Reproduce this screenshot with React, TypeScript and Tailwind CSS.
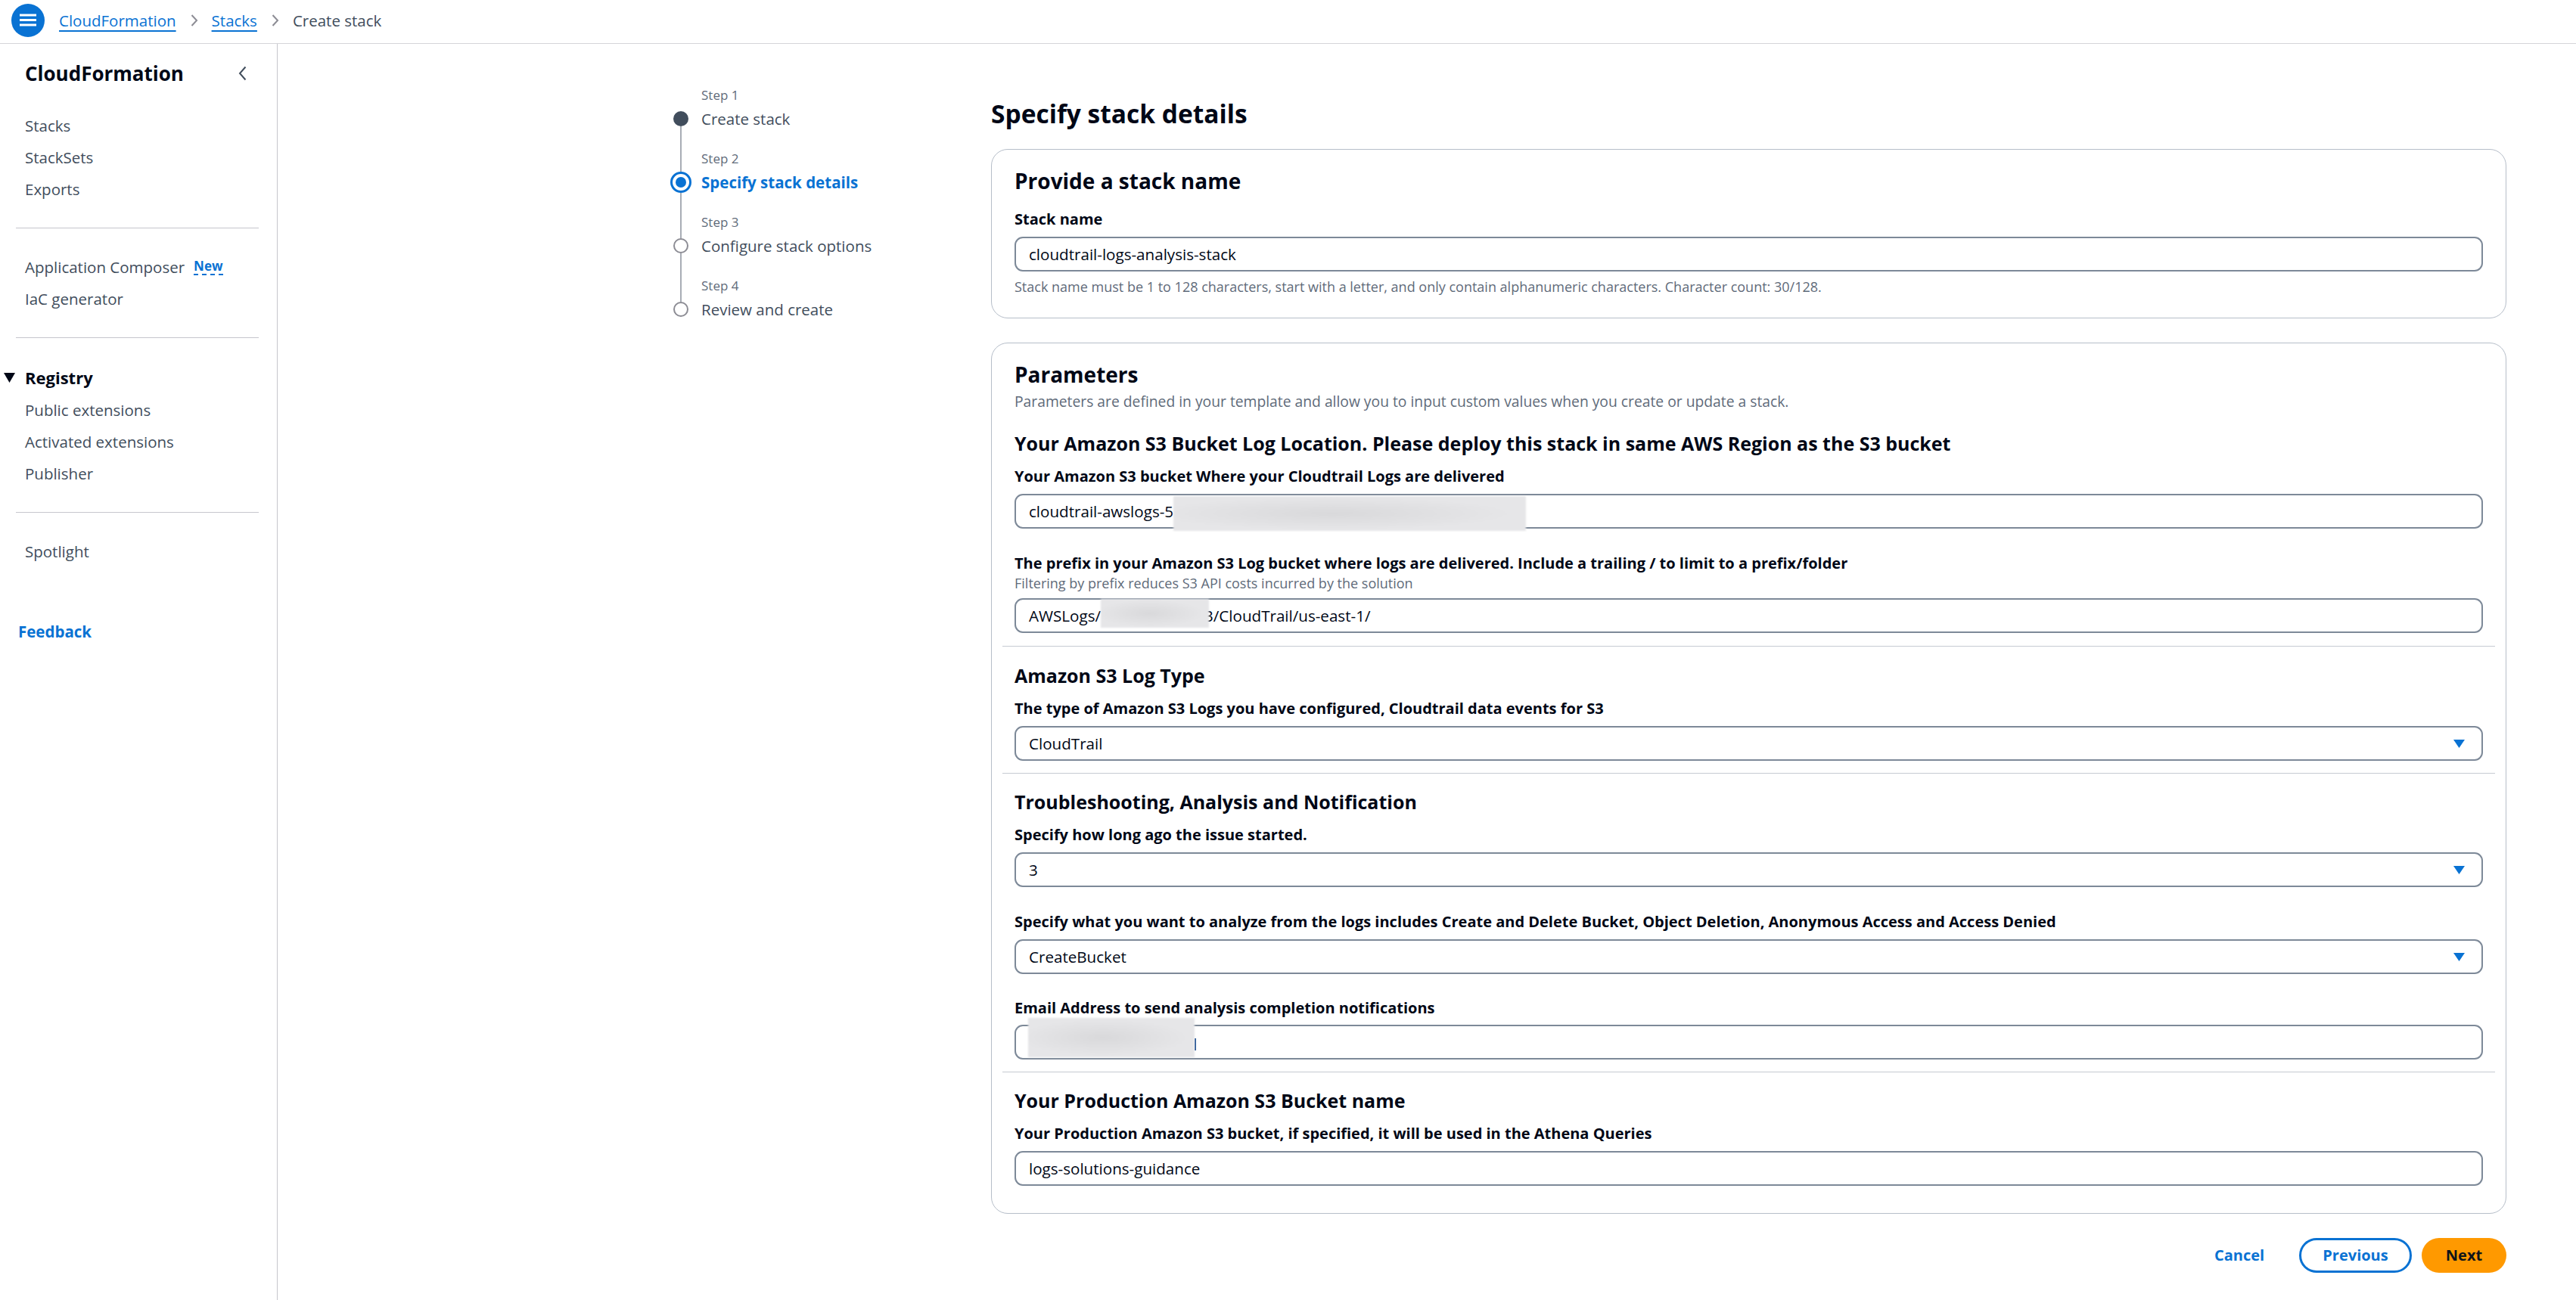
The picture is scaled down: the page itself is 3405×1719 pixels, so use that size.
import React from "react";

const blue = "#0972d3";

function Crumb() {
  return (
    <svg width="13" height="18" viewBox="0 0 13 18" className="mx-[17px] shrink-0">
      <path d="M3.5 2l6.5 7-6.5 7" fill="none" stroke="#8c8c94" strokeWidth="2" />
    </svg>
  );
}

function Redacted({ className }: { className: string }) {
  return (
    <span
      className={`relative z-10 inline-block shrink-0 bg-[radial-gradient(ellipse_at_45%_50%,#d9d9db,#e6e6e8_65%)] blur-[1px] ${className}`}
    />
  );
}

function Field({ children, select, className = "" }: { children: React.ReactNode; select?: boolean; className?: string }) {
  return (
    <div
      className={`flex h-[46px] items-center whitespace-nowrap rounded-[11px] border-2 border-[#7d8998] pl-[17px] pr-[22px] text-[20.6px] text-[#000716] ${className}`}
    >
      {children}
      {select && (
        <svg width="15" height="11" viewBox="0 0 15 11" className="ml-auto shrink-0">
          <path d="M0 0h15L7.5 11z" fill={blue} />
        </svg>
      )}
    </div>
  );
}

function Label({ children, className = "" }: { children: React.ReactNode; className?: string }) {
  return <div className={`text-[20px] font-bold leading-[28px] text-[#000716] ${className}`}>{children}</div>;
}

function SectionTitle({ children, className = "" }: { children: React.ReactNode; className?: string }) {
  return <h3 className={`text-[25px] font-bold leading-[29px] text-[#000716] ${className}`}>{children}</h3>;
}

function Hint({ children, className = "" }: { children: React.ReactNode; className?: string }) {
  return <p className={`text-[18px] leading-[22px] text-[#5f6b7a] ${className}`}>{children}</p>;
}

function Divider({ className = "" }: { className?: string }) {
  return <div className={`-mx-[16px] h-px bg-[#c6cbd2] ${className}`} />;
}

const steps = [
  { title: "Create stack", state: "done" },
  { title: "Specify stack details", state: "active" },
  { title: "Configure stack options", state: "todo" },
  { title: "Review and create", state: "todo" },
];

function Stepper() {
  return (
    <div className="flex w-[424px] shrink-0 flex-col">
      {steps.map((s, i) => {
        const last = i === steps.length - 1;
        return (
          <div key={s.title} className="flex gap-[13px]">
            <div className="flex w-[28px] shrink-0 flex-col items-center">
              <div
                className={`w-[2px] ${s.state === "active" ? "h-[28px]" : "h-[32px]"} ${i === 0 ? "" : "bg-[#a8adb5]"}`}
              />
              {s.state === "done" && <div className="h-[20px] w-[20px] rounded-full bg-[#414d5c]" />}
              {s.state === "active" && (
                <div className="flex h-[28px] w-[28px] items-center justify-center rounded-full border-[3px] border-[#0972d3]">
                  <div className="h-[14px] w-[14px] rounded-full bg-[#0972d3]" />
                </div>
              )}
              {s.state === "todo" && <div className="h-[20px] w-[20px] rounded-full border-2 border-[#8c8c94] bg-white" />}
              <div className={`w-[2px] flex-1 ${last ? "" : "bg-[#a8adb5]"}`} />
            </div>
            <div className={`flex flex-col ${last ? "" : "pb-[28px]"}`}>
              <span className="text-[17px] leading-[22px] text-[#5f6b7a]">Step {i + 1}</span>
              <span
                className={`mt-[6px] text-[20.5px] leading-[28px] ${
                  s.state === "active" ? "font-bold text-[#0972d3]" : "text-[#414d5c]"
                }`}
              >
                {s.title}
              </span>
            </div>
          </div>
        );
      })}
    </div>
  );
}

function NavDivider({ className = "" }: { className?: string }) {
  return <div className={`ml-[21px] mr-[24px] h-px bg-[#c6c6cd] ${className}`} />;
}

function Sidebar() {
  return (
    <aside className="w-[367px] shrink-0 border-r border-[#c6c6cd] pt-[23px]">
      <div className="flex items-center justify-between pl-[33px] pr-[40px]">
        <span className="text-[26px] font-bold leading-[32px] text-[#000716]">CloudFormation</span>
        <svg width="11" height="20" viewBox="0 0 11 20">
          <path d="M9.5 1.5L2 10l7.5 8.5" fill="none" stroke="#414d5c" strokeWidth="2" />
        </svg>
      </div>
      <ul className="mt-[39px] flex flex-col gap-[14px] pl-[33px] text-[20.5px] leading-[28px] text-[#414d5c]">
        <li>Stacks</li>
        <li>StackSets</li>
        <li>Exports</li>
      </ul>
      <NavDivider className="my-[37px]" />
      <ul className="flex flex-col gap-[14px] pl-[33px] text-[20.5px] leading-[28px] text-[#414d5c]">
        <li className="flex items-center">
          Application Composer
          <span className="ml-[12px] border-b-2 border-dashed border-[#0972d3] text-[17px] font-bold leading-[20px] text-[#0972d3]">
            New
          </span>
        </li>
        <li>IaC generator</li>
      </ul>
      <NavDivider className="my-[37px]" />
      <div className="flex items-center pl-[5px]">
        <svg width="15" height="13" viewBox="0 0 15 13">
          <path d="M0 0h15L7.5 13z" fill="#000716" />
        </svg>
        <span className="ml-[13px] text-[22px] font-bold leading-[30px] text-[#000716]">Registry</span>
      </div>
      <ul className="mt-[14px] flex flex-col gap-[14px] pl-[33px] text-[20.5px] leading-[28px] text-[#414d5c]">
        <li>Public extensions</li>
        <li>Activated extensions</li>
        <li>Publisher</li>
      </ul>
      <NavDivider className="my-[37px]" />
      <div className="pl-[33px] text-[20.5px] leading-[28px] text-[#414d5c]">Spotlight</div>
      <div className="mt-[78px] pl-[24px] text-[20.5px] font-bold leading-[28px] text-[#0972d3]">Feedback</div>
    </aside>
  );
}

export default function App() {
  return (
    <div className="flex h-screen flex-col overflow-hidden bg-white font-['Open_Sans',sans-serif]">
      <header className="flex h-[58px] shrink-0 items-center border-b border-[#d5d5d9] pb-[4px] pl-[15px]">
        <div className="flex h-[44px] w-[44px] items-center justify-center rounded-full bg-[#0972d3]">
          <svg width="22" height="17" viewBox="0 0 22 17">
            <path d="M0 2h22M0 8.5h22M0 15h22" stroke="#fff" strokeWidth="3" />
          </svg>
        </div>
        <nav className="ml-[19px] flex items-center text-[20.5px] leading-[28px]">
          <span className="text-[#0972d3] underline decoration-2 underline-offset-[5px]">CloudFormation</span>
          <Crumb />
          <span className="text-[#0972d3] underline decoration-2 underline-offset-[5px]">Stacks</span>
          <Crumb />
          <span className="text-[#414d5c]">Create stack</span>
        </nav>
      </header>

      <div className="flex flex-1">
        <Sidebar />
        <main className="flex flex-1 pl-[519px] pr-[92px] pt-[57px]">
          <Stepper />
          <div className="flex-1 pt-[14px]">
            <h1 className="text-[33.5px] font-bold leading-[43px] text-[#000716]">Specify stack details</h1>

            <section className="mt-[25px] rounded-[22px] border border-[#b6bec9] px-[30px] pb-[30px] pt-[24px]">
              <h2 className="text-[28px] font-bold leading-[34px] text-[#000716]">Provide a stack name</h2>
              <Label className="mt-[20px]">Stack name</Label>
              <Field className="mt-[9px]">cloudtrail-logs-analysis-stack</Field>
              <Hint className="mt-[9px]">
                Stack name must be 1 to 128 characters, start with a letter, and only contain alphanumeric characters.
                Character count: 30/128.
              </Hint>
            </section>

            <section className="mt-[32px] rounded-[22px] border border-[#b6bec9] px-[30px] pb-[36px] pt-[24px]">
              <h2 className="text-[28px] font-bold leading-[34px] text-[#000716]">Parameters</h2>
              <p className="mt-[5px] text-[19.3px] leading-[28px] text-[#5f6b7a]">
                Parameters are defined in your template and allow you to input custom values when you create or update a
                stack.
              </p>

              <SectionTitle className="mt-[27px]">
                Your Amazon S3 Bucket Log Location. Please deploy this stack in same AWS Region as the S3 bucket
              </SectionTitle>
              <Label className="mt-[15px]">Your Amazon S3 bucket Where your Cloudtrail Logs are delivered</Label>
              <Field className="mt-[9px]">
                <span>cloudtrail-awslogs-5</span>
                <Redacted className="h-[46px] w-[466px] translate-y-[3px]" />
              </Field>

              <Label className="mt-[32px]">
                The prefix in your Amazon S3 Log bucket where logs are delivered. Include a trailing / to limit to a
                prefix/folder
              </Label>
              <Hint className="mt-[1px]">Filtering by prefix reduces S3 API costs incurred by the solution</Hint>
              <Field className="mt-[9px]">
                <span>AWSLogs/</span>
                <Redacted className="-mr-[6px] h-[38px] w-[143px] -translate-y-[3px]" />
                <span>3/CloudTrail/us-east-1/</span>
              </Field>

              <Divider className="mt-[17px]" />
              <SectionTitle className="mt-[24px]">Amazon S3 Log Type</SectionTitle>
              <Label className="mt-[15px]">
                The type of Amazon S3 Logs you have configured, Cloudtrail data events for S3
              </Label>
              <Field select className="mt-[9px]">
                CloudTrail
              </Field>

              <Divider className="mt-[16px]" />
              <SectionTitle className="mt-[23px]">Troubleshooting, Analysis and Notification</SectionTitle>
              <Label className="mt-[15px]">Specify how long ago the issue started.</Label>
              <Field select className="mt-[9px]">
                3
              </Field>
              <Label className="mt-[32px]">
                Specify what you want to analyze from the logs includes Create and Delete Bucket, Object Deletion,
                Anonymous Access and Access Denied
              </Label>
              <Field select className="mt-[9px]">
                CreateBucket
              </Field>
              <Label className="mt-[31px]">Email Address to send analysis completion notifications</Label>
              <Field className="mt-[8px]">
                <Redacted className="-ml-[1px] h-[52px] w-[220px] -translate-y-[6px]" />
                <span className="h-[16px] w-[2px] translate-y-[3px] bg-[#1d4f91]" />
              </Field>

              <Divider className="mt-[16px]" />
              <SectionTitle className="mt-[23px]">Your Production Amazon S3 Bucket name</SectionTitle>
              <Label className="mt-[15px]">
                Your Production Amazon S3 bucket, if specified, it will be used in the Athena Queries
              </Label>
              <Field className="mt-[9px]">logs-solutions-guidance</Field>
            </section>

            <div className="mt-[32px] flex justify-end gap-[13px]">
              <button className="flex h-[46px] w-[132px] items-center justify-center text-[20px] font-bold text-[#0972d3]">
                Cancel
              </button>
              <button className="flex h-[46px] w-[149px] items-center justify-center rounded-full border-[3px] border-[#0972d3] bg-white text-[20px] font-bold text-[#0972d3]">
                Previous
              </button>
              <button className="flex h-[46px] w-[112px] items-center justify-center rounded-full bg-[#ff9900] text-[20px] font-bold text-[#0f141a]">
                Next
              </button>
            </div>
          </div>
        </main>
      </div>
    </div>
  );
}
